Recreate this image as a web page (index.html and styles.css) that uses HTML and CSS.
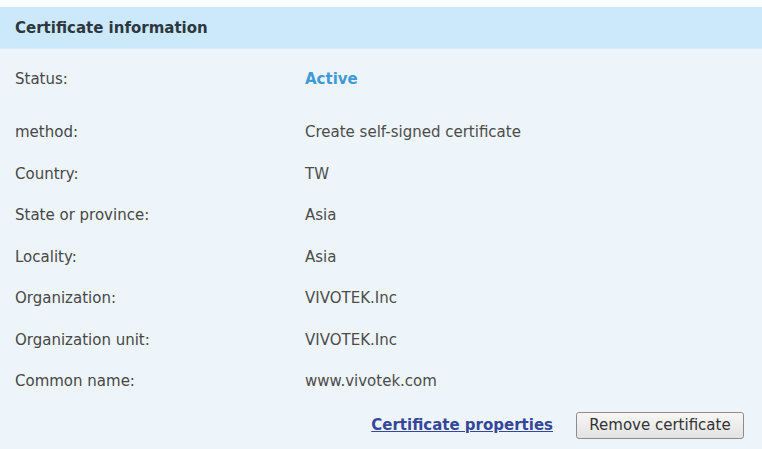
FILE: index.html
```html
<!DOCTYPE html>
<html>
<head>
<meta charset="utf-8">
<link rel="stylesheet" href="styles.css">
</head>
<body>
<div class="panel">
  <div class="panel-header">Certificate information</div>
  <div class="panel-body">
    <div class="row status-row">
      <span class="label">Status:</span>
      <span class="value active">Active</span>
    </div>
    <div class="rows">
      <div class="row"><span class="label">method:</span><span class="value">Create self-signed certificate</span></div>
      <div class="row"><span class="label">Country:</span><span class="value">TW</span></div>
      <div class="row"><span class="label">State or province:</span><span class="value">Asia</span></div>
      <div class="row"><span class="label">Locality:</span><span class="value">Asia</span></div>
      <div class="row"><span class="label">Organization:</span><span class="value">VIVOTEK.Inc</span></div>
      <div class="row"><span class="label">Organization unit:</span><span class="value">VIVOTEK.Inc</span></div>
      <div class="row"><span class="label">Common name:</span><span class="value">www.vivotek.com</span></div>
    </div>
    <div class="actions">
      <a class="link" href="#">Certificate properties</a>
      <button class="btn" type="button">Remove certificate</button>
    </div>
  </div>
</div>
</body>
</html>
```
FILE: styles.css
```css
html, body {
  margin: 0;
  padding: 0;
  background: #ffffff;
}
body {
  padding-top: 7px;
  font-family: "DejaVu Sans", "Liberation Sans", sans-serif;
  font-size: 15px;
  color: #444;
  width: 762px;
  height: 449px;
  box-sizing: border-box;
  overflow: hidden;
}
.panel {
  background: #eef5fa;
  height: 442px;
}
.panel-header {
  height: 42px;
  line-height: 42px;
  padding-left: 15px;
  background: #cce9fb;
  font-weight: bold;
  color: #2c3740;
  border-bottom: 1px solid #d6ecf8;
  box-sizing: border-box;
}
.panel-body {
  padding-top: 9px;
}
.row {
  display: grid;
  grid-template-columns: 290px 1fr;
  padding-left: 15px;
  height: 41.5px;
  line-height: 41.5px;
}
.status-row {
  height: 42px;
  line-height: 42px;
  margin-bottom: 12px;
}
.label {
  color: #474747;
}
.value {
  color: #4c4c4c;
}
.active {
  color: #3d9bd7;
  font-weight: bold;
}
.actions {
  display: flex;
  justify-content: flex-end;
  align-items: center;
  gap: 23px;
  padding-right: 18px;
  padding-top: 2px;
  height: 41.5px;
}
.link {
  color: #34479b;
  font-weight: bold;
  text-decoration: underline;
}
.btn {
  font-family: "DejaVu Sans", "Liberation Sans", sans-serif;
  font-size: 15px;
  color: #333;
  width: 168px;
  height: 27px;
  padding: 0;
  border: 1px solid #8c8c8c;
  border-radius: 3px;
  background: linear-gradient(#f7f7f7, #e2e2e2);
}
```
